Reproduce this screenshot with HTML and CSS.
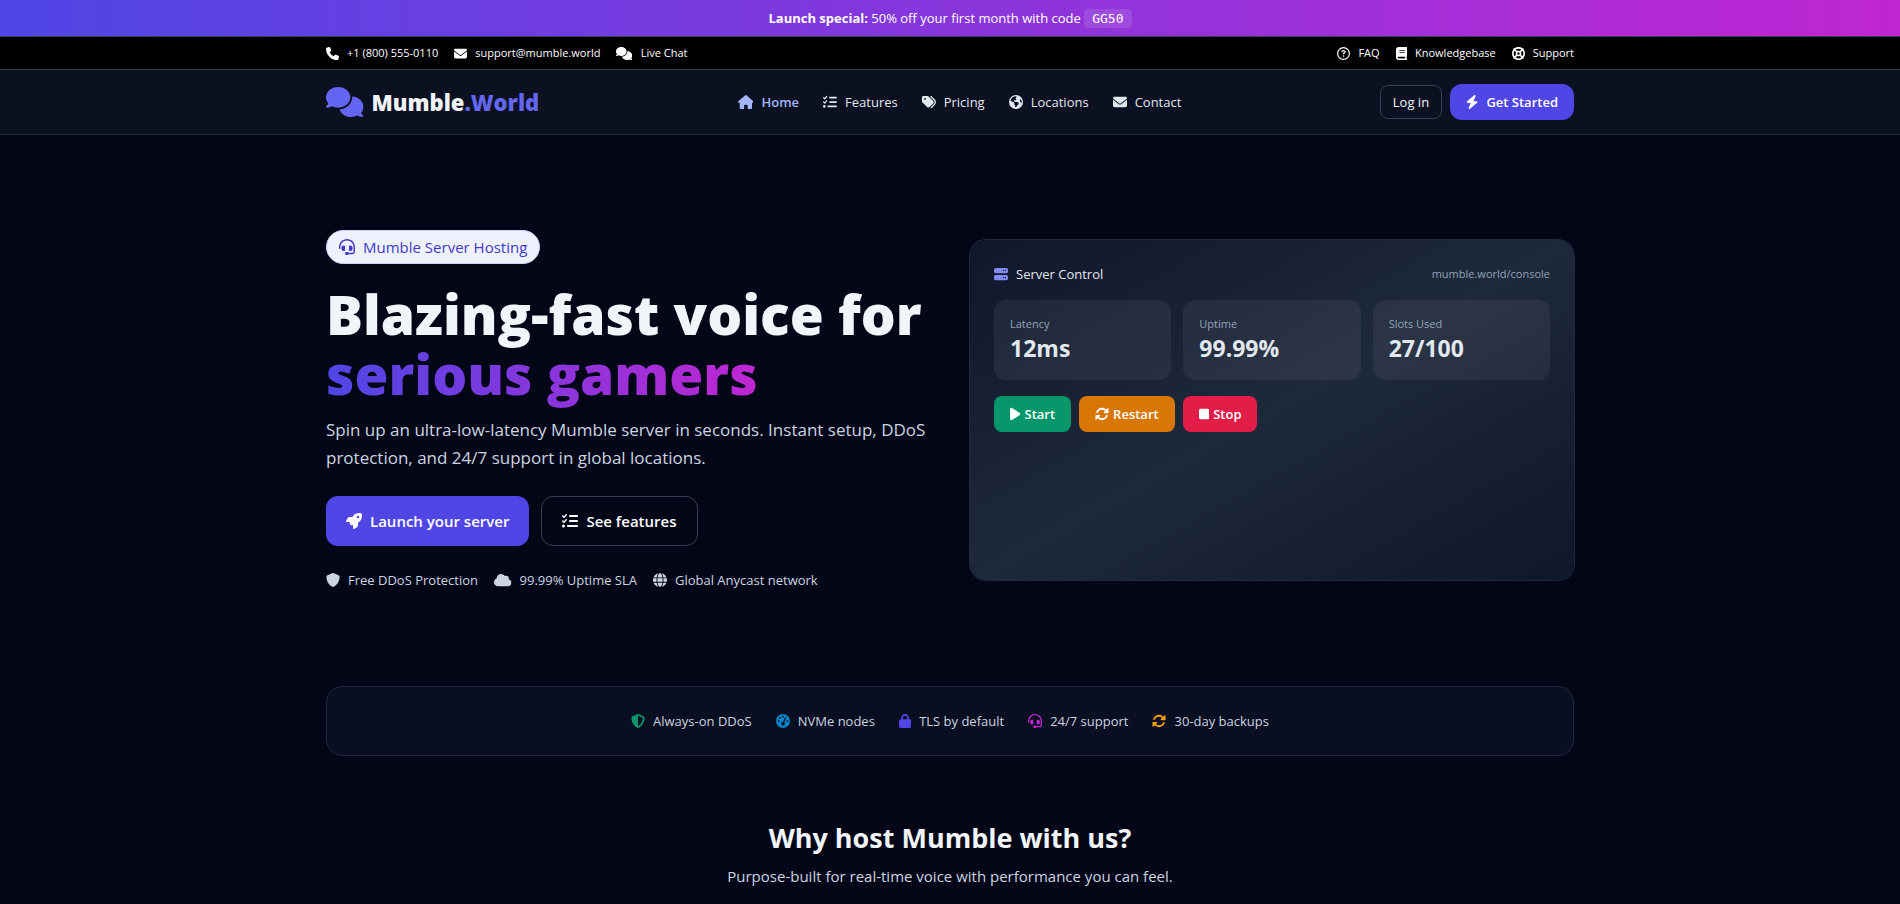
FILE: index.html
```html
<!DOCTYPE html>
<html lang="en">
<head>
    <meta charset="UTF-8">
    <meta name="viewport" content="width=device-width, initial-scale=1.0">
    <title>Mumble.World</title>
    <link rel="stylesheet" href="styles.css">
</head>
<body>
    <!-- Icon sprite -->
    <svg class="sprite" aria-hidden="true">
        <symbol id="i-phone" viewBox="0 0 512 512"><path d="M164.9 24.6c-7.7-18.6-28-28.5-47.4-23.2l-88 24C12.1 30.2 0 46 0 64C0 311.4 200.6 512 448 512c18 0 33.8-12.1 38.6-29.5l24-88c5.3-19.4-4.6-39.7-23.2-47.4l-96-40c-16.3-6.8-35.2-2.1-46.3 11.6L304.7 368C234.3 334.7 177.3 277.7 144 207.3L193.3 167c13.7-11.2 18.4-30 11.6-46.3l-40-96z"/></symbol>
        <symbol id="i-envelope" viewBox="0 0 512 512"><path d="M48 64C21.5 64 0 85.5 0 112c0 15.1 7.1 29.3 19.2 38.4L236.8 313.6c11.4 8.5 27 8.5 38.4 0L492.8 150.4c12.1-9.1 19.2-23.3 19.2-38.4c0-26.5-21.5-48-48-48L48 64zM0 176L0 384c0 35.3 28.7 64 64 64l384 0c35.3 0 64-28.7 64-64l0-208L294.4 339.2c-22.8 17.1-54 17.1-76.8 0L0 176z"/></symbol>
        <symbol id="i-comments" viewBox="0 0 640 512"><path d="M208 352c114.9 0 208-78.8 208-176S322.9 0 208 0S0 78.8 0 176c0 38.6 14.7 74.3 39.6 103.4c-3.5 9.4-8.7 17.7-14.2 24.7c-4.8 6.2-9.7 11-13.3 14.3c-1.8 1.6-3.3 2.9-4.3 3.7c-.5 .4-.9 .7-1.1 .8l-.2 .2C1 327.2-1.4 334.4 .8 340.9S9.1 352 16 352c21.8 0 43.8-5.6 62.1-12.5c9.2-3.5 17.8-7.4 25.2-11.4C134.1 343.3 169.8 352 208 352zM448 176c0 112.3-99.1 196.9-216.5 207C255.8 457.4 336.4 512 432 512c38.2 0 73.9-8.7 104.7-23.9c7.5 4 16 7.9 25.2 11.4c18.3 6.9 40.3 12.5 62.1 12.5c6.9 0 13.1-4.5 15.2-11.1c2.1-6.6-.2-13.8-5.8-17.9l-.2-.2c-.2-.2-.6-.4-1.1-.8c-1-.8-2.5-2-4.3-3.7c-3.6-3.3-8.5-8.1-13.3-14.3c-5.5-7-10.7-15.4-14.2-24.7c24.9-29 39.6-64.7 39.6-103.4c0-92.8-84.9-168.9-192.6-175.5c.4 5.1 .6 10.3 .6 15.5z"/></symbol>
        <symbol id="i-question" viewBox="0 0 512 512"><path d="M464 256A208 208 0 1 0 48 256a208 208 0 1 0 416 0zM0 256a256 256 0 1 1 512 0A256 256 0 1 1 0 256zm169.8-90.7c7.9-22.3 29.1-37.3 52.8-37.3l58.3 0c34.9 0 63.1 28.3 63.1 63.1c0 22.6-12.1 43.5-31.7 54.8L280 264.4c-.2 13-10.9 23.6-24 23.6c-13.3 0-24-10.7-24-24l0-13.5c0-8.6 4.6-16.5 12.1-20.8l44.3-25.4c4.7-2.7 7.6-7.7 7.6-13.1c0-8.4-6.8-15.1-15.1-15.1l-58.3 0c-3.4 0-6.4 2.1-7.5 5.3l-.4 1.2c-4.4 12.5-18.2 19-30.6 14.6s-19-18.2-14.6-30.6l.4-1.2zM224 352a32 32 0 1 1 64 0 32 32 0 1 1 -64 0z"/></symbol>
        <symbol id="i-book" viewBox="0 0 448 512"><path d="M96 0C43 0 0 43 0 96L0 416c0 53 43 96 96 96l288 0 32 0c17.7 0 32-14.3 32-32s-14.3-32-32-32l0-64c17.7 0 32-14.3 32-32l0-320c0-17.7-14.3-32-32-32L384 0 96 0zm0 384l256 0 0 64L96 448c-17.7 0-32-14.3-32-32s14.3-32 32-32zm32-240c0-8.8 7.2-16 16-16l192 0c8.8 0 16 7.2 16 16s-7.2 16-16 16l-192 0c-8.8 0-16-7.2-16-16zm16 48l192 0c8.8 0 16 7.2 16 16s-7.2 16-16 16l-192 0c-8.8 0-16-7.2-16-16s7.2-16 16-16z"/></symbol>
        <symbol id="i-life-ring" viewBox="0 0 512 512"><path d="M367.2 412.5C335.9 434.9 297.5 448 256 448s-79.9-13.1-111.2-35.5l58-58c15.8 8.6 34 13.5 53.3 13.5s37.4-4.9 53.3-13.5l58 58zm90.7 .8c33.8-43.4 54-98 54-157.3s-20.2-113.9-54-157.3c9-12.5 7.9-30.1-3.4-41.3S425.8 45 413.3 54C369.9 20.2 315.3 0 256 0S142.1 20.2 98.7 54c-12.5-9-30.1-7.9-41.3 3.4S45 86.2 54 98.7C20.2 142.1 0 196.7 0 256s20.2 113.9 54 157.3c-9 12.5-7.9 30.1 3.4 41.3S86.2 467 98.7 458c43.4 33.8 98 54 157.3 54s113.9-20.2 157.3-54c12.5 9 30.1 7.9 41.3-3.4s12.4-28.8 3.4-41.3zm-45.5-46.1l-58-58c8.6-15.8 13.5-34 13.5-53.3s-4.9-37.4-13.5-53.3l58-58C434.9 176.1 448 214.5 448 256s-13.1 79.9-35.5 111.2zM367.2 99.5l-58 58c-15.8-8.6-34-13.5-53.3-13.5s-37.4 4.9-53.3 13.5l-58-58C176.1 77.1 214.5 64 256 64s79.9 13.1 111.2 35.5zM157.5 309.3l-58 58C77.1 335.9 64 297.5 64 256s13.1-79.9 35.5-111.2l58 58c-8.6 15.8-13.5 34-13.5 53.3s4.9 37.4 13.5 53.3zM208 256a48 48 0 1 1 96 0 48 48 0 1 1 -96 0z"/></symbol>
        <symbol id="i-house" viewBox="0 0 576 512"><path d="M575.8 255.5c0 18-15 32.1-32 32.1l-32 0 .7 160.2c0 2.7-.2 5.4-.5 8.1l0 16.2c0 22.1-17.9 40-40 40l-16 0c-1.1 0-2.2 0-3.3-.1c-1.4 .1-2.8 .1-4.2 .1L416 512l-24 0c-22.1 0-40-17.9-40-40l0-24 0-64c0-17.7-14.3-32-32-32l-64 0c-17.7 0-32 14.3-32 32l0 64 0 24c0 22.1-17.9 40-40 40l-24 0-31.9 0c-1.5 0-3-.1-4.5-.2c-1.2 .1-2.4 .2-3.6 .2l-16 0c-22.1 0-40-17.9-40-40l0-112c0-.9 0-1.9 .1-2.8l0-69.7-32 0c-18 0-32-14-32-32.1c0-9 3-17 10-24L266.4 8c7-7 15-8 22-8s15 2 21 7L564.8 231.5c8 7 12 15 11 24z"/></symbol>
        <symbol id="i-list-check" viewBox="0 0 512 512"><path d="M152.1 38.2c9.9 8.9 10.7 24 1.8 33.9l-72 80c-4.4 4.9-10.6 7.8-17.2 7.9s-12.9-2.4-17.6-7L7 113C-2.3 103.6-2.3 88.4 7 79s24.6-9.4 33.9 0l22.1 22.1 55.1-61.2c8.9-9.9 24-10.7 33.9-1.8zm0 160c9.9 8.9 10.7 24 1.8 33.9l-72 80c-4.4 4.9-10.6 7.8-17.2 7.9s-12.9-2.4-17.6-7L7 273c-9.4-9.4-9.4-24.6 0-33.9s24.6-9.4 33.9 0l22.1 22.1 55.1-61.2c8.9-9.9 24-10.7 33.9-1.8zM224 96c0-17.7 14.3-32 32-32l224 0c17.7 0 32 14.3 32 32s-14.3 32-32 32l-224 0c-17.7 0-32-14.3-32-32zm0 160c0-17.7 14.3-32 32-32l224 0c17.7 0 32 14.3 32 32s-14.3 32-32 32l-224 0c-17.7 0-32-14.3-32-32zM160 416c0-17.7 14.3-32 32-32l288 0c17.7 0 32 14.3 32 32s-14.3 32-32 32l-288 0c-17.7 0-32-14.3-32-32zM48 368a48 48 0 1 1 0 96 48 48 0 1 1 0-96z"/></symbol>
        <symbol id="i-tags" viewBox="0 0 512 512"><path d="M345 39.1L472.8 168.4c52.4 53 52.4 138.2 0 191.2L360.8 472.9c-9.3 9.4-24.5 9.5-33.9 .2s-9.5-24.5-.2-33.9L438.6 325.9c33.9-34.3 33.9-89.4 0-123.7L310.9 72.9c-9.3-9.4-9.2-24.6 .2-33.9s24.6-9.2 33.9 .2zM0 229.5L0 80C0 53.5 21.5 32 48 32l149.5 0c17 0 33.3 6.7 45.3 18.7l168 168c25 25 25 65.5 0 90.5L277.3 442.7c-25 25-65.5 25-90.5 0l-168-168C6.7 262.7 0 246.5 0 229.5zM144 144a32 32 0 1 0 -64 0 32 32 0 1 0 64 0z"/></symbol>
        <symbol id="i-earth" viewBox="0 0 512 512"><path d="M57.7 193l9.4 16.4c8.3 14.5 21.9 25.2 38 29.8L163 255.7c17.2 4.9 29 20.6 29 38.5l0 39.9c0 11 6.2 21 16 25.9s16 14.9 16 25.9l0 39c0 15.6 14.9 26.9 29.9 22.6c16.1-4.6 28.6-17.5 32.7-33.8l2.8-11.2c4.2-16.9 15.2-31.4 30.3-40l8.1-4.6c15-8.5 24.2-24.5 24.2-41.7l0-8.3c0-12.7-5.1-24.9-14.1-33.9l-3.9-3.9c-9-9-21.2-14.1-33.9-14.1L257 256c-11.1 0-22.1-2.9-31.8-8.4l-34.5-19.7c-4.3-2.5-7.6-6.5-9.2-11.2c-3.2-9.6 1.1-20 10.2-24.5l5.9-3c6.6-3.3 14.3-3.9 21.3-1.5l23.2 7.7c8.2 2.7 17.2-.4 21.9-7.5c4.7-7 4.2-16.3-1.2-22.8l-13.6-16.3c-10-12-9.9-29.5 .3-41.3l15.7-18.3c8.8-10.3 10.2-25 3.5-36.7l-2.4-4.2c-3.5-.2-6.9-.3-10.4-.3C163.1 48 84.4 108.9 57.7 193zM464 256c0-36.8-9.6-71.4-26.4-101.5L412 164.8c-15.7 6.3-23.8 23.8-18.5 39.8l16.9 50.7c3.5 10.4 12 18.3 22.6 20.9l29.1 7.3c1.2-9 1.8-18.2 1.8-27.5zM0 256a256 256 0 1 1 512 0A256 256 0 1 1 0 256z"/></symbol>
        <symbol id="i-bolt" viewBox="0 0 448 512"><path d="M349.4 44.6c5.9-13.7 1.5-29.7-10.6-38.5s-28.6-8-39.9 1.8l-256 224c-10 8.8-13.6 22.9-8.9 35.3S50.7 288 64 288l111.5 0L98.6 467.4c-5.9 13.7-1.5 29.7 10.6 38.5s28.6 8 39.9-1.8l256-224c10-8.8 13.6-22.9 8.9-35.3s-16.6-20.7-30-20.7l-111.5 0L349.4 44.6z"/></symbol>
        <symbol id="i-headset" viewBox="0 0 512 512"><path d="M256 48C141.1 48 48 141.1 48 256l0 40c0 13.3-10.7 24-24 24s-24-10.7-24-24l0-40C0 114.6 114.6 0 256 0S512 114.6 512 256l0 144.1c0 48.6-39.4 88-88.1 88L313.6 488c-8.3 14.3-23.8 24-41.6 24l-32 0c-26.5 0-48-21.5-48-48s21.5-48 48-48l32 0c17.8 0 33.3 9.7 41.6 24l110.4 .1c22.1 0 40-17.9 40-40L464 256c0-114.9-93.1-208-208-208zM144 208l16 0c17.7 0 32 14.3 32 32l0 112c0 17.7-14.3 32-32 32l-16 0c-35.3 0-64-28.7-64-64l0-48c0-35.3 28.7-64 64-64zm224 0c35.3 0 64 28.7 64 64l0 48c0 35.3-28.7 64-64 64l-16 0c-17.7 0-32-14.3-32-32l0-112c0-17.7 14.3-32 32-32l16 0z"/></symbol>
        <symbol id="i-rocket" viewBox="0 0 512 512"><path d="M156.6 384.9L125.7 354c-8.5-8.5-11.5-20.8-7.7-32.2c3-8.9 7-20.5 11.8-33.8L24 288c-8.6 0-16.6-4.6-20.9-12.1s-4.2-16.7 .2-24.1l52.5-88.5c13-21.9 36.5-35.3 61.9-35.3l82.3 0c2.4-4 4.8-7.7 7.2-11.3C289.1-4.1 411.1-8.1 483.9 5.3c11.6 2.1 20.6 11.2 22.8 22.8c13.4 72.9 9.3 194.8-111.4 276.7c-3.5 2.4-7.3 4.8-11.3 7.2l0 82.3c0 25.4-13.4 49-35.3 61.9l-88.5 52.5c-7.4 4.4-16.6 4.5-24.1 .2s-12.1-12.2-12.1-20.9l0-107.2c-14.1 4.9-26.4 8.9-35.7 11.9c-11.2 3.6-23.4 .5-31.8-7.8zM384 168a40 40 0 1 0 0-80 40 40 0 1 0 0 80z"/></symbol>
        <symbol id="i-shield" viewBox="0 0 512 512"><path d="M256 0c4.6 0 9.2 1 13.4 2.9L457.7 82.8c22 9.3 38.4 31 38.3 57.2c-.5 99.2-41.3 280.7-213.6 363.2c-16.7 8-36.1 8-52.8 0C57.3 420.7 16.5 239.2 16 140c-.1-26.2 16.3-47.9 38.3-57.2L242.7 2.9C246.8 1 251.4 0 256 0z"/></symbol>
        <symbol id="i-shield-half" viewBox="0 0 512 512"><path fill-rule="evenodd" d="M256 0c4.6 0 9.2 1 13.4 2.9L457.7 82.8c22 9.3 38.4 31 38.3 57.2c-.5 99.2-41.3 280.7-213.6 363.2c-16.7 8-36.1 8-52.8 0C57.3 420.7 16.5 239.2 16 140c-.1-26.2 16.3-47.9 38.3-57.2L242.7 2.9C246.8 1 251.4 0 256 0zm0 66.8l0 378.1C394 378 431.1 230.1 432 141.4L256 66.8z"/></symbol>
        <symbol id="i-cloud" viewBox="0 0 640 512"><path d="M0 336c0 79.5 64.5 144 144 144l368 0c70.7 0 128-57.3 128-128c0-61.9-44-113.6-102.4-125.4c4.1-10.7 6.4-22.4 6.4-34.6c0-53-43-96-96-96c-19.7 0-38.1 6-53.3 16.2C367 64.2 315.3 32 256 32C167.6 32 96 103.6 96 192c0 2.7 .1 5.4 .2 8.1C40.2 219.8 0 273.2 0 336z"/></symbol>
        <symbol id="i-globe" viewBox="0 0 512 512"><path d="M352 256c0 22.2-1.2 43.6-3.3 64l-185.3 0c-2.2-20.4-3.3-41.8-3.3-64s1.2-43.6 3.3-64l185.3 0c2.2 20.4 3.3 41.8 3.3 64zm28.8-64l123.1 0c5.3 20.5 8.1 41.9 8.1 64s-2.8 43.5-8.1 64l-123.1 0c2.1-20.6 3.2-42 3.2-64s-1.1-43.4-3.2-64zm112.6-32l-116.7 0c-10-63.9-29.8-117.4-55.3-151.6c78.3 20.7 142 77.5 171.9 151.6zm-149.1 0l-176.6 0c6.1-36.4 15.5-68.6 27-94.7c10.5-23.6 22.2-40.7 33.5-51.5C239.4 3.2 248.7 0 256 0s16.6 3.2 27.8 13.8c11.3 10.8 23 27.9 33.5 51.5c11.6 26 20.9 58.2 27 94.7zm-209 0L18.6 160C48.6 85.9 112.2 29.1 190.6 8.4C165.1 42.6 145.3 96.1 135.3 160zM8.1 192l123.1 0c-2.1 20.6-3.2 42-3.2 64s1.1 43.4 3.2 64L8.1 320C2.8 299.5 0 278.1 0 256s2.8-43.5 8.1-64zM194.7 446.6c-11.6-26-20.9-58.2-27-94.6l176.6 0c-6.1 36.4-15.5 68.6-27 94.6c-10.5 23.6-22.2 40.7-33.5 51.5C272.6 508.8 263.3 512 256 512s-16.6-3.2-27.8-13.8c-11.3-10.8-23-27.9-33.5-51.5zM135.3 352c10 63.9 29.8 117.4 55.3 151.6C112.2 482.9 48.6 426.1 18.6 352l116.7 0zm358.1 0c-30 74.1-93.6 130.9-171.9 151.6c25.5-34.2 45.2-87.7 55.3-151.6l116.7 0z"/></symbol>
        <symbol id="i-server" viewBox="0 0 512 512"><path d="M64 32C28.7 32 0 60.7 0 96l0 64c0 35.3 28.7 64 64 64l384 0c35.3 0 64-28.7 64-64l0-64c0-35.3-28.7-64-64-64L64 32zm280 72a24 24 0 1 1 0 48 24 24 0 1 1 0-48zm48 24a24 24 0 1 1 48 0 24 24 0 1 1 -48 0zM64 288c-35.3 0-64 28.7-64 64l0 64c0 35.3 28.7 64 64 64l384 0c35.3 0 64-28.7 64-64l0-64c0-35.3-28.7-64-64-64L64 288zm280 72a24 24 0 1 1 0 48 24 24 0 1 1 0-48zm56 24a24 24 0 1 1 48 0 24 24 0 1 1 -48 0z"/></symbol>
        <symbol id="i-play" viewBox="0 0 384 512"><path d="M73 39c-14.8-9.1-33.4-9.4-48.5-.9S0 62.6 0 80L0 432c0 17.4 9.4 33.4 24.5 41.9s33.7 8.1 48.5-.9L361 297c14.3-8.7 23-24.2 23-41s-8.7-32.2-23-41L73 39z"/></symbol>
        <symbol id="i-rotate" viewBox="0 0 512 512"><path d="M142.9 142.9c-17.5 17.5-30.1 38-37.8 59.8c-5.9 16.7-24.2 25.4-40.8 19.5s-25.4-24.2-19.5-40.8C55.6 150.7 73.2 122 97.6 97.6c87.2-87.2 228.3-87.5 315.8-1L455 55c6.9-6.9 17.2-8.9 26.2-5.2s14.8 12.5 14.8 22.2l0 128c0 13.3-10.7 24-24 24l-8.4 0L344 224c-9.7 0-18.5-5.8-22.2-14.8s-1.7-19.3 5.2-26.2l41.1-41.1c-62.6-61.5-163.1-61.2-225.3 1zM16 312c0-13.3 10.7-24 24-24l7.6 0 .7 0L168 288c9.7 0 18.5 5.8 22.2 14.8s1.7 19.3-5.2 26.2l-41.1 41.1c62.6 61.5 163.1 61.2 225.3-1c17.5-17.5 30.1-38 37.8-59.8c5.9-16.7 24.2-25.4 40.8-19.5s25.4 24.2 19.5 40.8c-10.8 30.6-28.4 59.3-52.9 83.8c-87.2 87.2-228.3 87.5-315.8 1L57 457c-6.9 6.9-17.2 8.9-26.2 5.2S16 449.7 16 440l0-119.6 0-.7 0-7.6z"/></symbol>
        <symbol id="i-stop" viewBox="0 0 384 512"><path d="M0 128C0 92.7 28.7 64 64 64H320c35.3 0 64 28.7 64 64V384c0 35.3-28.7 64-64 64H64c-35.3 0-64-28.7-64-64V128z"/></symbol>
        <symbol id="i-lock" viewBox="0 0 448 512"><path d="M144 144l0 48 160 0 0-48c0-44.2-35.8-80-80-80s-80 35.8-80 80zM80 192l0-48C80 64.5 144.5 0 224 0s144 64.5 144 144l0 48 16 0c35.3 0 64 28.7 64 64l0 192c0 35.3-28.7 64-64 64L64 512c-35.3 0-64-28.7-64-64L0 256c0-35.3 28.7-64 64-64l16 0z"/></symbol>
        <symbol id="i-gauge" viewBox="0 0 512 512"><path d="M0 256a256 256 0 1 1 512 0A256 256 0 1 1 0 256zM288 96a32 32 0 1 0 -64 0 32 32 0 1 0 64 0zM256 416c35.3 0 64-28.7 64-64c0-17.4-6.9-33.1-18.1-44.6L366 161.7c5.3-12.1-.2-26.3-12.3-31.6s-26.3 .2-31.6 12.3L257.9 288c-.6 0-1.3 0-1.9 0c-35.3 0-64 28.7-64 64s28.7 64 64 64zM176 144a32 32 0 1 0 -64 0 32 32 0 1 0 64 0zM96 288a32 32 0 1 0 0-64 32 32 0 1 0 0 64zm352-32a32 32 0 1 0 -64 0 32 32 0 1 0 64 0z"/></symbol>
    </svg>

    <div class="promo">
        <strong>Launch special:</strong> 50% off your first month with code <code>GG50</code>
    </div>

    <div class="topbar">
        <div class="container topbar-inner">
            <div class="topbar-group">
                <a href="tel:+18005550110"><svg class="icon"><use href="#i-phone"/></svg>+1 (800) 555-0110</a>
                <a href="mailto:support@mumble.world"><svg class="icon"><use href="#i-envelope"/></svg>support@mumble.world</a>
                <a href="#chat"><svg class="icon icon-wide"><use href="#i-comments"/></svg>Live Chat</a>
            </div>
            <div class="topbar-group">
                <a href="#faq"><svg class="icon"><use href="#i-question"/></svg>FAQ</a>
                <a href="#kb"><svg class="icon icon-narrow"><use href="#i-book"/></svg>Knowledgebase</a>
                <a href="#support"><svg class="icon"><use href="#i-life-ring"/></svg>Support</a>
            </div>
        </div>
    </div>

    <header class="header">
        <div class="container header-inner">
            <a class="logo" href="#"><svg class="icon icon-wide"><use href="#i-comments"/></svg><span>Mumble<span class="logo-accent">.World</span></span></a>
            <nav class="nav">
                <a class="active" href="#home"><svg class="icon icon-house"><use href="#i-house"/></svg>Home</a>
                <a href="#features"><svg class="icon"><use href="#i-list-check"/></svg>Features</a>
                <a href="#pricing"><svg class="icon"><use href="#i-tags"/></svg>Pricing</a>
                <a href="#locations"><svg class="icon"><use href="#i-earth"/></svg>Locations</a>
                <a href="#contact"><svg class="icon"><use href="#i-envelope"/></svg>Contact</a>
            </nav>
            <div class="header-actions">
                <a class="btn-login" href="#login">Log in</a>
                <a class="btn-start" href="#start"><svg class="icon icon-narrow"><use href="#i-bolt"/></svg>Get Started</a>
            </div>
        </div>
    </header>

    <main>
        <section class="container hero">
            <div class="hero-text">
                <span class="pill"><svg class="icon"><use href="#i-headset"/></svg>Mumble Server Hosting</span>
                <h1>Blazing-fast voice for<br><span class="gradient-text">serious gamers</span></h1>
                <p class="lead">Spin up an ultra-low-latency Mumble server in seconds. Instant setup, DDoS protection, and 24/7 support in global locations.</p>
                <div class="hero-buttons">
                    <a class="btn-primary" href="#launch"><svg class="icon"><use href="#i-rocket"/></svg>Launch your server</a>
                    <a class="btn-outline" href="#features"><svg class="icon"><use href="#i-list-check"/></svg>See features</a>
                </div>
                <ul class="perks">
                    <li><svg class="icon"><use href="#i-shield"/></svg>Free DDoS Protection</li>
                    <li><svg class="icon icon-wide"><use href="#i-cloud"/></svg>99.99% Uptime SLA</li>
                    <li><svg class="icon"><use href="#i-globe"/></svg>Global Anycast network</li>
                </ul>
            </div>

            <div class="panel">
                <div class="panel-head">
                    <span class="panel-title"><svg class="icon"><use href="#i-server"/></svg>Server Control</span>
                    <span class="panel-url">mumble.world/console</span>
                </div>
                <div class="stats">
                    <div class="stat">
                        <div class="stat-label">Latency</div>
                        <div class="stat-value">12ms</div>
                    </div>
                    <div class="stat">
                        <div class="stat-label">Uptime</div>
                        <div class="stat-value">99.99%</div>
                    </div>
                    <div class="stat">
                        <div class="stat-label">Slots Used</div>
                        <div class="stat-value">27/100</div>
                    </div>
                </div>
                <div class="controls">
                    <button class="control green" type="button"><svg class="icon icon-slim"><use href="#i-play"/></svg>Start</button>
                    <button class="control amber" type="button"><svg class="icon"><use href="#i-rotate"/></svg>Restart</button>
                    <button class="control red" type="button"><svg class="icon icon-slim"><use href="#i-stop"/></svg>Stop</button>
                </div>
            </div>
        </section>

        <section class="container">
            <ul class="trust">
                <li><svg class="icon emerald"><use href="#i-shield-half"/></svg>Always-on DDoS</li>
                <li><svg class="icon sky"><use href="#i-gauge"/></svg>NVMe nodes</li>
                <li><svg class="icon icon-narrow indigo"><use href="#i-lock"/></svg>TLS by default</li>
                <li><svg class="icon fuchsia"><use href="#i-headset"/></svg>24/7 support</li>
                <li><svg class="icon orange"><use href="#i-rotate"/></svg>30-day backups</li>
            </ul>
        </section>

        <section class="container why">
            <h2>Why host Mumble with us?</h2>
            <p>Purpose-built for real-time voice with performance you can feel.</p>
        </section>
    </main>
</body>
</html>
```
FILE: styles.css
```css
* {
    box-sizing: border-box;
}
html {
    height: 100%;
    overflow: hidden;
}
body {
    margin: 0;
    height: 100%;
    overflow: hidden;
    font-family: "Segoe UI", "Open Sans", "Noto Sans", sans-serif;
    font-size: 15px;
    line-height: 24px;
    color: #f1f5f9;
    background-color: #020617;
}
a {
    color: inherit;
    text-decoration: none;
}
h1, h2, p, ul {
    margin: 0;
    padding: 0;
}
ul {
    list-style: none;
}
.sprite {
    display: none;
}
.container {
    max-width: 1280px;
    margin: 0 auto;
    padding: 0 16px;
}
.icon {
    width: 1em;
    height: 1em;
    flex-shrink: 0;
    fill: currentColor;
}
.icon-wide { width: 1.25em; }
.icon-house { width: 1.125em; }
.icon-narrow { width: 0.875em; }
.icon-slim { width: 0.75em; }

/* promo + top bar */
.promo {
    padding: 8px 16px;
    font-size: 13px;
    line-height: 20px;
    text-align: center;
    color: #fff;
    background: linear-gradient(to right, #4f46e5, #c026d3);
}
.promo strong {
    font-weight: 700;
}
.promo code {
    padding: 2px 8px;
    border-radius: 4px;
    font-family: Consolas, "DejaVu Sans Mono", monospace;
    font-size: 13px;
    line-height: 16px;
    background-color: rgba(255, 255, 255, 0.12);
}
.topbar {
    font-size: 11px;
    line-height: 16px;
    color: #fff;
    background-color: #000;
    border-top: 1px solid #334155;
    border-bottom: 1px solid #334155;
}
.topbar-inner {
    display: flex;
    justify-content: space-between;
    padding-top: 8px;
    padding-bottom: 8px;
}
.topbar-group {
    display: flex;
    gap: 16px;
}
.topbar a {
    display: flex;
    align-items: center;
    gap: 8px;
}
.topbar .icon {
    font-size: 13px;
}

/* header */
.header {
    background-color: #0c1122;
    border-bottom: 1px solid #1e293b;
}
.header-inner {
    display: flex;
    align-items: center;
    justify-content: space-between;
    height: 64px;
}
.logo {
    display: flex;
    align-items: center;
    gap: 8px;
    font-size: 22px;
    font-weight: 800;
}
.logo .icon {
    font-size: 30px;
    color: #6366f1;
}
.logo-accent {
    color: #6366f1;
}
.nav {
    display: flex;
    gap: 24px;
    font-size: 13px;
    font-weight: 500;
    color: #e2e8f0;
}
.nav a {
    display: flex;
    align-items: center;
    gap: 8px;
}
.nav .icon {
    font-size: 14px;
}
.nav .active {
    font-weight: 600;
    color: #a5b4fc;
}
.header-actions {
    display: flex;
    align-items: center;
    gap: 8px;
    font-size: 13px;
    line-height: 20px;
}
.btn-login {
    padding: 6px 12px;
    border: 1px solid #334155;
    border-radius: 8px;
    font-weight: 500;
}
.btn-start {
    display: flex;
    align-items: center;
    gap: 8px;
    padding: 8px 16px;
    border-radius: 12px;
    font-weight: 600;
    color: #fff;
    background-color: #4f46e5;
}
.btn-start .icon {
    font-size: 14px;
}

/* hero */
.hero {
    display: grid;
    grid-template-columns: 1fr 1fr;
    align-items: center;
    gap: 40px;
    padding-top: 95px;
    padding-bottom: 96px;
}
.pill {
    display: flex;
    align-items: center;
    gap: 8px;
    width: fit-content;
    padding: 4px 12px;
    border: 1px solid #c7d2fe;
    border-radius: 17px;
    color: #4338ca;
    background-color: #eef2ff;
}
.pill .icon {
    font-size: 16px;
}
h1 {
    margin-top: 20px;
    font-size: 55px;
    line-height: 60px;
    font-weight: 800;
}
.gradient-text {
    color: transparent;
    background: linear-gradient(to right, #4f46e5, #c026d3);
    -webkit-background-clip: text;
    background-clip: text;
}
.lead {
    margin-top: 12px;
    font-size: 17px;
    line-height: 28px;
    color: #cbd5e1;
}
.hero-buttons {
    display: flex;
    gap: 12px;
    margin-top: 24px;
    font-weight: 600;
}
.btn-primary,
.btn-outline {
    display: flex;
    align-items: center;
    gap: 8px;
    border-radius: 12px;
    color: #fff;
}
.btn-primary {
    padding: 13px 20px;
    background-color: #4f46e5;
}
.btn-outline {
    padding: 12px 20px;
    border: 1px solid #334155;
}
.btn-primary .icon,
.btn-outline .icon {
    font-size: 16px;
}
.perks {
    display: flex;
    gap: 16px;
    margin-top: 24px;
    font-size: 13px;
    line-height: 20px;
    color: #cbd5e1;
}
.perks li,
.trust li {
    display: flex;
    align-items: center;
    gap: 8px;
}
.perks .icon,
.trust .icon {
    font-size: 14px;
}

/* server control panel */
.panel {
    aspect-ratio: 16 / 9;
    padding: 24px;
    border-radius: 16px;
    background: linear-gradient(to bottom right, #0f172a, #1e293b, #0f172a);
    box-shadow: 0 0 0 1px #1e293b;
}
.panel-head {
    display: flex;
    align-items: center;
    justify-content: space-between;
    margin-bottom: 16px;
    line-height: 20px;
}
.panel-title {
    display: flex;
    align-items: center;
    gap: 8px;
    font-size: 13px;
    color: #e2e8f0;
}
.panel-title .icon {
    font-size: 14px;
    color: #818cf8;
}
.panel-url,
.stat-label {
    font-size: 11px;
    color: #94a3b8;
}
.stats {
    display: grid;
    grid-template-columns: repeat(3, 1fr);
    gap: 12px;
}
.stat {
    padding: 16px;
    border-radius: 12px;
    background-color: rgba(255, 255, 255, 0.06);
}
.stat-label {
    line-height: 16px;
}
.stat-value {
    font-size: 23px;
    line-height: 32px;
    font-weight: 700;
    color: #e2e8f0;
}
.controls {
    display: flex;
    gap: 8px;
    margin-top: 16px;
}
.control {
    display: flex;
    align-items: center;
    gap: 4px;
    padding: 8px 16px;
    border: none;
    border-radius: 8px;
    font-family: inherit;
    font-size: 13px;
    line-height: 20px;
    font-weight: 600;
    color: #fff;
    cursor: pointer;
}
.control .icon {
    font-size: 14px;
}
.green { background-color: #059669; }
.amber { background-color: #d97706; }
.red { background-color: #e11d48; }

/* trust strip */
.trust {
    display: flex;
    justify-content: center;
    gap: 24px;
    padding: 24px;
    border: 1px solid #1e293b;
    border-radius: 16px;
    font-size: 13px;
    line-height: 20px;
    font-weight: 500;
    color: #cbd5e1;
    background-color: #090e20;
}
.emerald { color: #059669; }
.sky { color: #0284c7; }
.indigo { color: #4f46e5; }
.fuchsia { color: #c026d3; }
.orange { color: #f59e0b; }

/* why section */
.why {
    padding-top: 64px;
    text-align: center;
}
.why h2 {
    font-size: 27px;
    line-height: 36px;
    font-weight: 700;
}
.why p {
    margin-top: 8px;
    color: #cbd5e1;
}
```
